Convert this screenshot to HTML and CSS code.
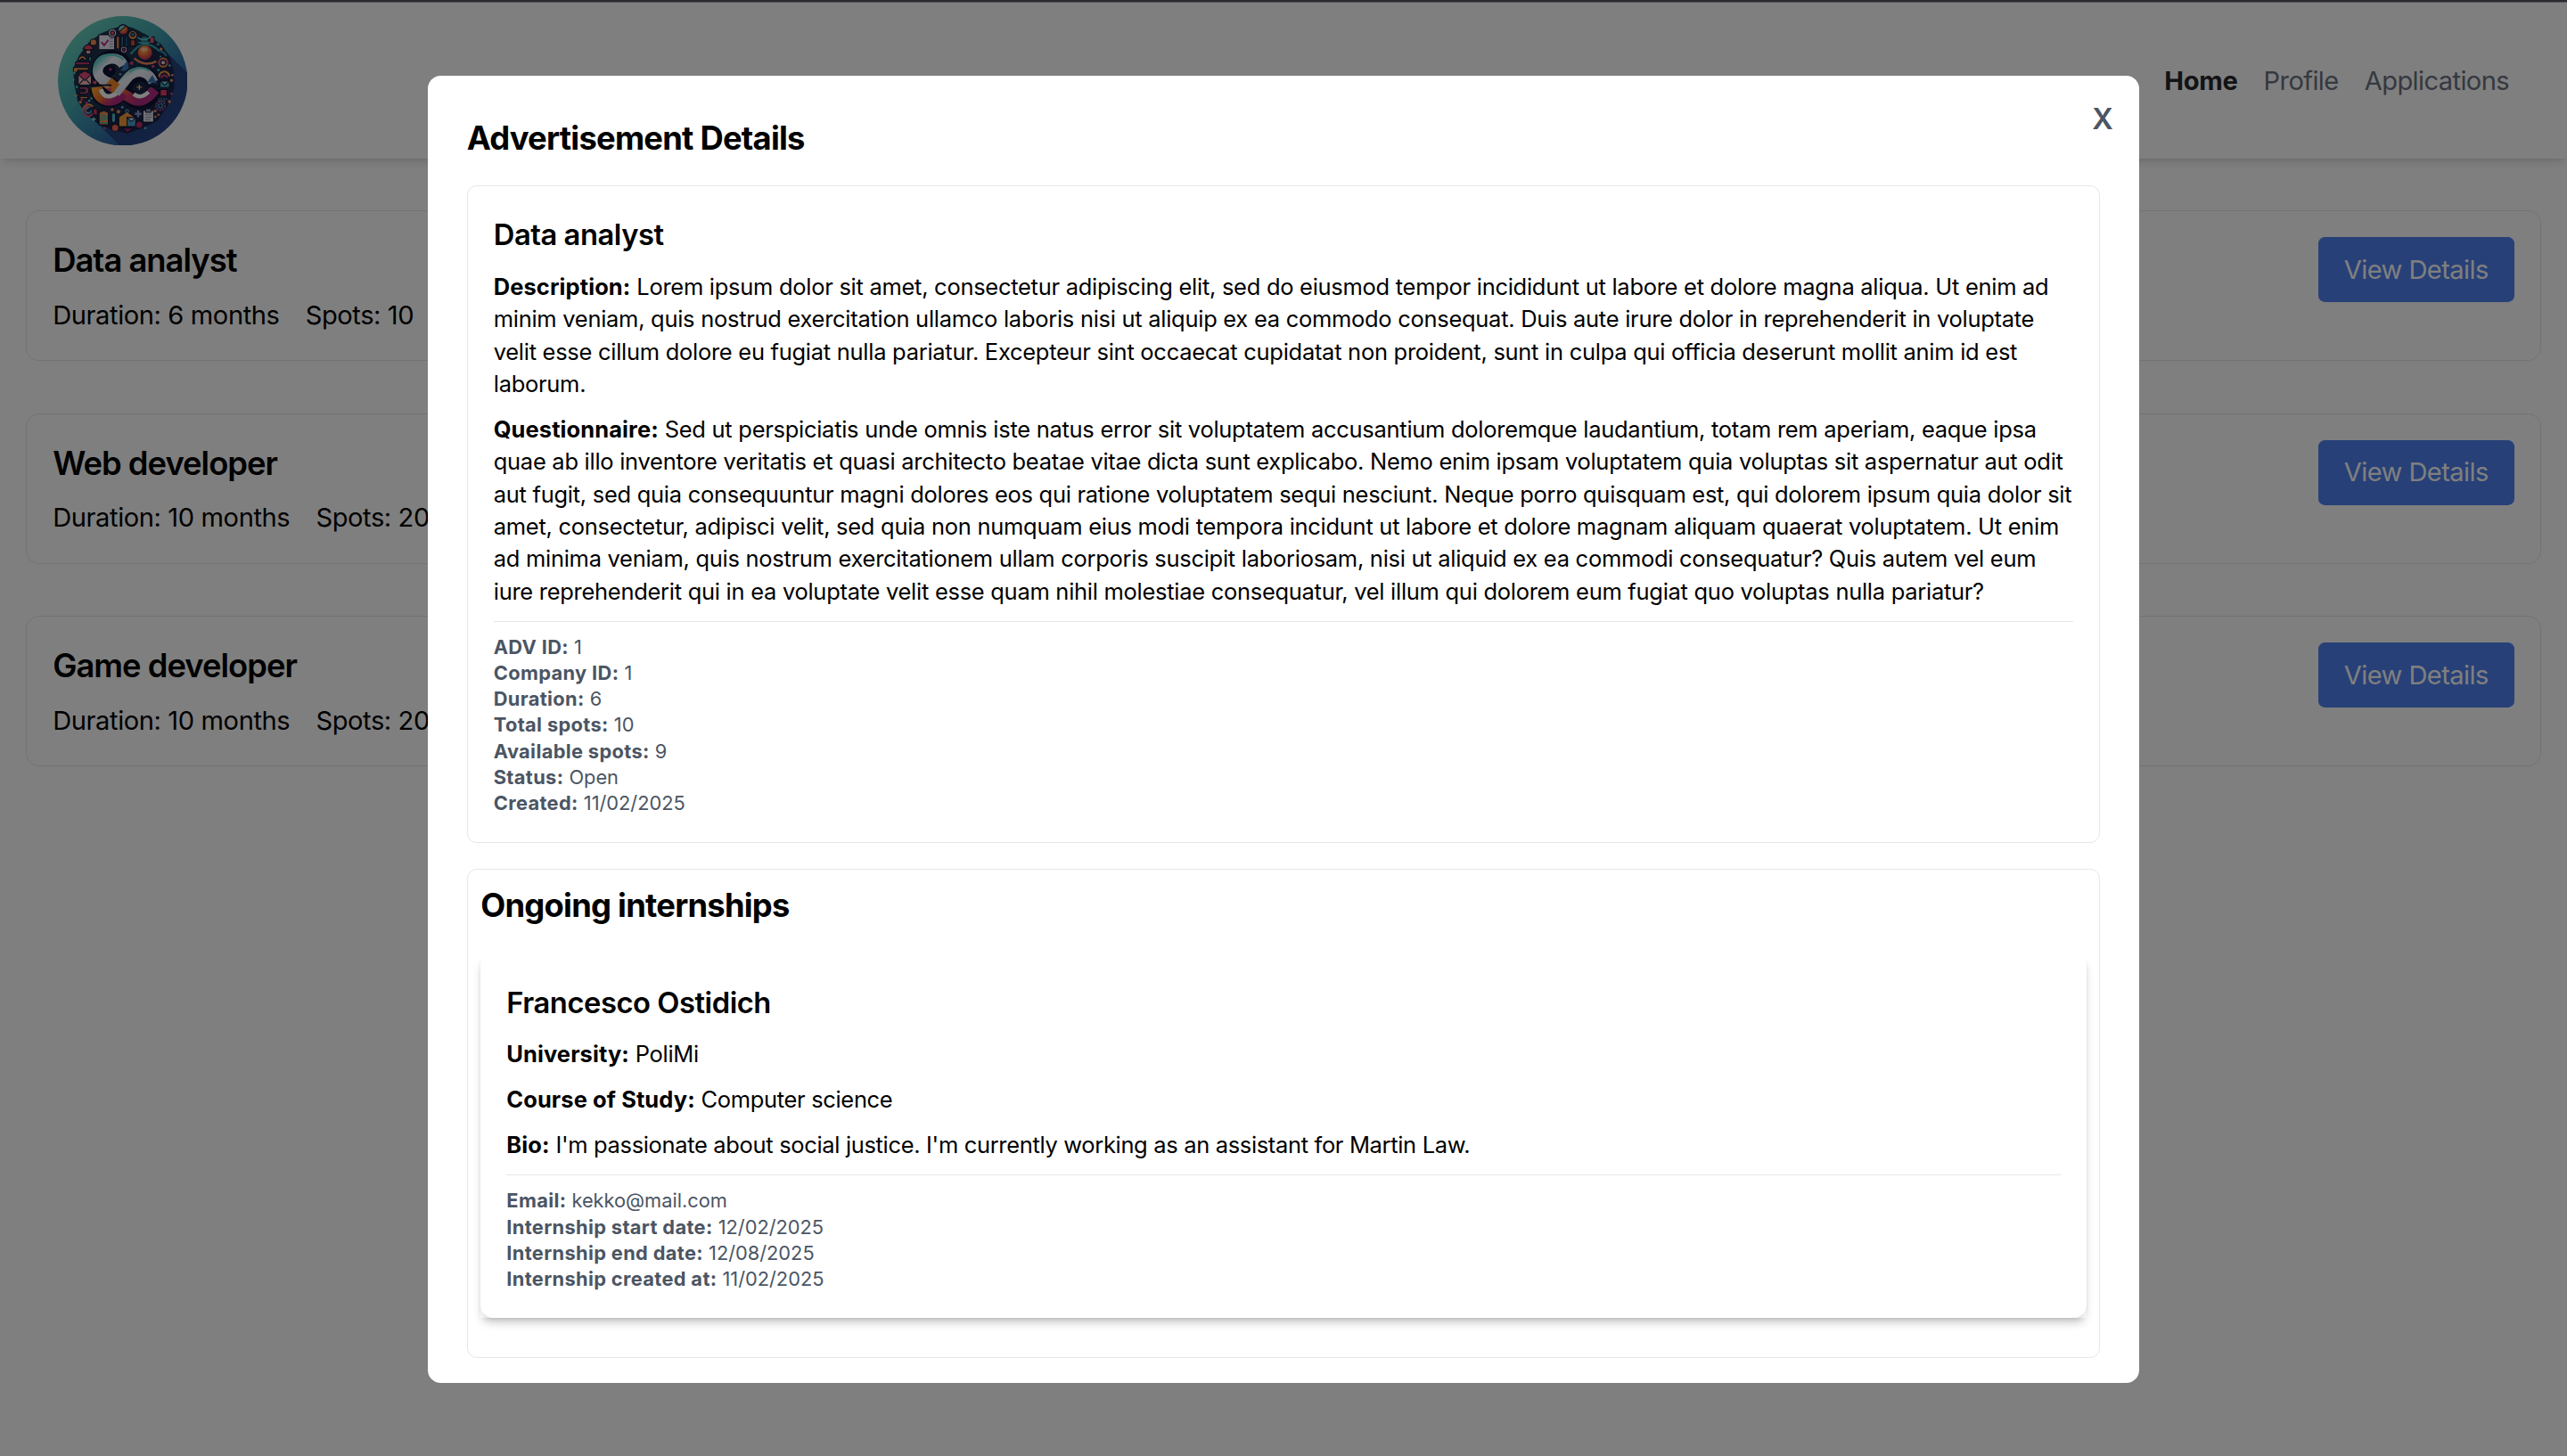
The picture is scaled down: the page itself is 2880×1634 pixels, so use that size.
FILE: index.html
```html
<!DOCTYPE html>
<html lang="en">
<head>
<meta charset="utf-8">
<title>Advertisements</title>
<link rel="stylesheet" href="styles.css">
</head>
<body>
<div class="window-edge"></div>
<div class="page">
  <header class="topbar">
    <svg class="logo" viewBox="46 24 435 435" aria-label="SC logo">
      <defs>
        <linearGradient id="bg" x1="0.1" y1="0.1" x2="0.85" y2="0.9">
          <stop offset="0" stop-color="#68d0b8"/><stop offset="0.4" stop-color="#44a8b0"/><stop offset="0.75" stop-color="#2f69a4"/><stop offset="1" stop-color="#284690"/>
        </linearGradient>
        <linearGradient id="cast" x1="0.2" y1="0.2" x2="0.9" y2="0.9">
          <stop offset="0" stop-color="#1b2250"/><stop offset="1" stop-color="#2b4c94"/>
        </linearGradient>
        <linearGradient id="warm" x1="0" y1="0" x2="1" y2="0.5">
          <stop offset="0" stop-color="#ffa030"/><stop offset="0.5" stop-color="#e86a28"/><stop offset="0.75" stop-color="#c83a68"/><stop offset="1" stop-color="#b02a80"/>
        </linearGradient>
        <linearGradient id="cool" x1="0" y1="0" x2="1" y2="1">
          <stop offset="0" stop-color="#58c8c8"/><stop offset="0.3" stop-color="#eef2fa"/><stop offset="0.75" stop-color="#d8dcea"/><stop offset="1" stop-color="#fff"/>
        </linearGradient>
        <radialGradient id="ball" cx="0.4" cy="0.3" r="0.8">
          <stop offset="0" stop-color="#ffc078"/><stop offset="0.45" stop-color="#f07030"/><stop offset="1" stop-color="#a02070"/>
        </radialGradient>
        <clipPath id="round"><circle cx="263.500" cy="241.500" r="217.500"/></clipPath>
      </defs>
      <g clip-path="url(#round)">
        <rect x="46" y="24" width="435" height="435" fill="url(#bg)"/>
        <path d="M385 120L520 255V480H275L160 365Z" fill="url(#cast)" opacity="0.75"/>
        <path d="M265 55L300 64L345 88L392 118L420 160L434 205L436 265L415 325L380 375L330 400L280 417L235 408L185 390L140 352L112 310L100 250L97 200L118 155L150 112L190 82L225 68Z" fill="#17203f" opacity="0.88"/>

        <g stroke="#10152f" stroke-width="3">
          <path d="M183 87H236V137H183Z" fill="#e9e6f2"/>
          <circle cx="265" cy="70" r="17" fill="url(#ball)"/>
          <path d="M265 53A17 17 0 0 0 250 78L275 57Z" fill="#7cc8c8"/>
          <circle cx="229" cy="81" r="14" fill="#e8d8ea"/>
          <circle cx="229" cy="81" r="7" fill="#e05070"/>
          <path d="M242 92H252V130L247 138L242 130Z" fill="#f08838"/>
          <path d="M258 92H266V128H258ZM272 92H279V128H272Z" fill="#2e6e98"/>
          <circle cx="267" cy="137" r="11" fill="#e8c0d0"/>
          <circle cx="267" cy="137" r="5" fill="#b03070"/>
          <circle cx="297" cy="88" r="15" fill="#f09858"/>
          <circle cx="297" cy="86" r="7" fill="#2e8098"/>
          <path d="M289 104H305V124H289Z" fill="#c05038"/>
          <circle cx="336" cy="105" r="15" fill="#2c8098"/>
          <path d="M354 94H369V116H354Z" fill="#e05868"/>
          <circle cx="392" cy="135" r="7" fill="#f09060"/>
          <circle cx="165" cy="112" r="11" fill="#f08850"/>
          <path d="M130 134Q148 106 166 134Q148 142 130 134Z" fill="#d84068"/>
          <path d="M138 138H158L154 152H142Z" fill="#f0a8a0"/>
          <path d="M114 172A14 14 0 0 1 142 172H134A6 6 0 0 0 122 172Z" fill="#f09850"/>
          <path d="M150 160H158V176H150Z" fill="#3eaab8"/>
          <path d="M105 179H153V188H105Z" fill="#c83a70"/>
          <path d="M98 197H148V206H112V212H98Z" fill="#e8904a"/>
          <path d="M114 220H158V256H114Z" fill="#f0b8b8"/>
          <path d="M114 220L136 240L158 220L136 208Z" fill="#e04878"/>
          <path d="M114 256L131 238M158 256L141 238" fill="none"/>
          <path d="M118 262H138A12 12 0 0 1 138 286H118V278H136A5 5 0 0 0 136 270H118Z" fill="#a84868"/>
          <path d="M120 294H146V301H120Z" fill="#f09848"/>
        </g>

        <path d="M192 111L201 122L215 104" fill="none" stroke="#b82c80" stroke-width="6"/>
        <path d="M219 100H231M219 109H231M219 118H231M219 127H231" stroke="#9a98b8" stroke-width="3"/>
        <path d="M313 96Q336 112 359 92M316 112Q338 120 354 112" fill="none" stroke="#58c8c8" stroke-width="4"/>

        <g fill="none" stroke-width="7">
          <path d="M290 152Q336 92 387 142" stroke="#38a0a8"/>
          <path d="M302 166Q336 196 376 176" stroke="#f08858"/>
          <path d="M384 140Q402 142 410 158" stroke="#2c86a8"/>
        </g>
        <circle cx="338" cy="148" r="27" fill="#17203f"/>
        <circle cx="338" cy="147" r="24" fill="url(#ball)"/>
        <ellipse cx="336" cy="136" rx="11" ry="6" fill="#ffd0b0" opacity="0.7"/>

        <g fill="none" stroke-width="6">
          <circle cx="399" cy="180" r="14" stroke="#f08848"/>
          <path d="M391 169A14 14 0 0 0 388 188M410 171A14 14 0 0 1 412 187" stroke="#c83878"/>
          <path d="M385 230A17 17 0 0 1 420 226" stroke="#f09848"/>
          <path d="M394 233A9 9 0 0 1 412 231" stroke="#c83878"/>
          <circle cx="390" cy="325" r="15" stroke="#8c4690" stroke-dasharray="7 3"/>
          <circle cx="390" cy="325" r="7" stroke="#3494a8" stroke-width="4"/>
          <path d="M131 340A18 18 0 0 1 163 328" stroke="#f09848"/>
          <path d="M163 349A16 16 0 1 1 155 330" stroke="#d84878"/>
          <path d="M157 341A9 9 0 1 1 149 332" stroke="#70c0c8" stroke-width="4"/>
        </g>
        <circle cx="399" cy="180" r="6" fill="#e8d0d0"/>

        <g stroke="#10152f" stroke-width="3">
          <path d="M388 242H420V264H388Z" fill="#3aa0b0"/>
          <path d="M388 242L404 256L420 242Z" fill="#78d0d0"/>
          <path d="M389 271H412V292H389Z" fill="#e03c68"/>
          <path d="M165 332L178 338V358L165 354Z" fill="#c83860"/>
          <path d="M184 348L200 341L215 348V389H184Z" fill="#f0884a"/>
          <path d="M226 350H239V376L232 384L226 376Z" fill="#50b8c8"/>
          <path d="M262 400H298L279 417Z" fill="#8c2070"/>
          <path d="M250 363L277 345L304 363V395H250Z" fill="#f09a3c"/>
          <path d="M278 365H307V395H278Z" fill="#4a9cc8"/>
          <path d="M278 365H307L292 378Z" fill="#c8dcec"/>
          <circle cx="319" cy="389" r="12" fill="#b02c68"/>
          <circle cx="238" cy="399" r="12" fill="#f06050"/>
          <path d="M331 341H367V380H331Z" fill="#e0e2ec"/>
          <path d="M341 335H358V347H341Z" fill="#8e98ae"/>
        </g>
        <path d="M187 354L212 360M187 364H212M187 373L212 369M187 382H212" stroke="#42b0a0" stroke-width="4"/>
        <path d="M338 355H361M338 363H361M338 371H355" stroke="#9098b0" stroke-width="3"/>
        <path d="M315 341V363M304 352H326" stroke="#8090c8" stroke-width="7"/>
        <path d="M166 363V377M159 370H173" stroke="#98d0e0" stroke-width="4"/>
        <circle cx="278" cy="343" r="5" fill="none" stroke="#58b0b8" stroke-width="3"/>
        <path d="M381 302H412M383 309H408" stroke="#78b8d0" stroke-width="3" stroke-dasharray="5 4"/>

        <g fill="#f0885a">
          <circle cx="372" cy="343" r="5"/><circle cx="383" cy="355" r="4"/><circle cx="373" cy="362" r="4"/><circle cx="121" cy="313" r="5"/><circle cx="107" cy="291" r="4"/><circle cx="249" cy="345" r="6"/><circle cx="228" cy="338" r="5"/><circle cx="427" cy="240" r="5"/><circle cx="430" cy="222" r="4"/><circle cx="420" cy="311" r="5"/>
        </g>
        <g fill="#d04080">
          <circle cx="293" cy="182" r="6"/><circle cx="365" cy="193" r="5"/><circle cx="126" cy="304" r="4"/><circle cx="143" cy="316" r="5"/><circle cx="203" cy="400" r="4"/><circle cx="427" cy="285" r="4"/>
        </g>
        <g fill="#58c0cc">
          <circle cx="101" cy="215" r="4"/><circle cx="98" cy="238" r="4"/><circle cx="109" cy="262" r="4"/><circle cx="151" cy="308" r="4"/><circle cx="159" cy="300" r="4"/><circle cx="383" cy="205" r="4"/><circle cx="421" cy="190" r="4"/><circle cx="262" cy="330" r="4"/><circle cx="339" cy="400" r="4"/><circle cx="382" cy="119" r="4"/><circle cx="390" cy="160" r="3"/>
        </g>

        <!-- interlaced monogram: dark backing, warm lower loops, light upper loops -->
        <g fill="none" stroke="#0e1230" stroke-width="50">
          <path d="M270 188A45 45 0 1 0 188 232L288 296A44 44 0 0 0 366 270"/>
          <path d="M177 268A40 40 0 0 0 246 293L284 236A48 48 0 0 1 364 244"/>
        </g>
        <g fill="none">
          <path d="M192 236L262 284L288 298Q330 326 371 271" stroke="url(#warm)" stroke-width="35"/>
          <path d="M300 286Q325 304 350 279" stroke="#fff" stroke-width="13"/>
          <path d="M176 262Q180 306 218 307Q246 306 262 282" stroke="url(#warm)" stroke-width="36"/>
          <path d="M190 270Q198 296 220 293Q238 290 248 276" stroke="#fff" stroke-width="15"/>
          <path d="M239 282L276 236Q297 208 326 212Q352 214 366 246" stroke="url(#cool)" stroke-width="33"/>
          <path d="M286 212Q318 186 354 208" stroke="#60d0c8" stroke-width="7"/>
          <path d="M266 190Q252 162 217 168Q179 178 179 209Q181 236 224 250" stroke="url(#cool)" stroke-width="34"/>
          <path d="M168 190Q180 154 220 154Q250 154 266 170" stroke="#60d0c8" stroke-width="7"/>
        </g>
        <path d="M226 231L253 253L232 281L208 252Z" fill="#f08828"/>
        <path d="M256 207L278 173L284 198L272 208Z" fill="#3678b8"/>
        <path d="M346 246L363 222L378 250Z" fill="#3678b8"/>
        <path d="M160 256H226M340 261H388" stroke="#0e1230" stroke-width="5"/>
        <circle cx="222" cy="206" r="18" fill="#0e1230"/>
        <circle cx="222" cy="203" r="5" fill="#b83878"/>
        <circle cx="219" cy="270" r="6" fill="#d84c78"/>
        <path d="M319 254V272M310 263H328" stroke="#ffb878" stroke-width="4"/>
        <circle cx="255" cy="219" r="4" fill="#70a0b8"/>
        <circle cx="170" cy="247" r="6" fill="#d05078"/>
      </g>
    </svg>
    <nav class="nav">
      <a class="nav-link nav-link-active">Home</a>
      <a class="nav-link">Profile</a>
      <a class="nav-link">Applications</a>
    </nav>
  </header>

  <main class="ads">
    <article class="ad">
      <div>
        <h2 class="ad-title">Data analyst</h2>
        <div class="ad-facts"><span>Duration: 6 months</span><span>Spots: 10</span></div>
      </div>
      <button class="button">View Details</button>
    </article>
    <article class="ad">
      <div>
        <h2 class="ad-title">Web developer</h2>
        <div class="ad-facts"><span>Duration: 10 months</span><span>Spots: 20</span></div>
      </div>
      <button class="button">View Details</button>
    </article>
    <article class="ad">
      <div>
        <h2 class="ad-title">Game developer</h2>
        <div class="ad-facts"><span>Duration: 10 months</span><span>Spots: 20</span></div>
      </div>
      <button class="button">View Details</button>
    </article>
  </main>
</div>

<div class="overlay">
  <div class="modal">
    <button class="close">X</button>
    <h2 class="heading modal-heading">Advertisement Details</h2>
    <section class="panel details">
      <h3 class="subheading">Data analyst</h3>
      <p class="text"><b>Description:</b> Lorem ipsum dolor sit amet, consectetur adipiscing elit, sed do eiusmod tempor incididunt ut labore et dolore magna aliqua. Ut enim ad minim veniam, quis nostrud exercitation ullamco laboris nisi ut aliquip ex ea commodo consequat. Duis aute irure dolor in reprehenderit in voluptate velit esse cillum dolore eu fugiat nulla pariatur. Excepteur sint occaecat cupidatat non proident, sunt in culpa qui officia deserunt mollit anim id est laborum.</p>
      <p class="text"><b>Questionnaire:</b> Sed ut perspiciatis unde omnis iste natus error sit voluptatem accusantium doloremque laudantium, totam rem aperiam, eaque ipsa quae ab illo inventore veritatis et quasi architecto beatae vitae dicta sunt explicabo. Nemo enim ipsam voluptatem quia voluptas sit aspernatur aut odit aut fugit, sed quia consequuntur magni dolores eos qui ratione voluptatem sequi nesciunt. Neque porro quisquam est, qui dolorem ipsum quia dolor sit amet, consectetur, adipisci velit, sed quia non numquam eius modi tempora incidunt ut labore et dolore magnam aliquam quaerat voluptatem. Ut enim ad minima veniam, quis nostrum exercitationem ullam corporis suscipit laboriosam, nisi ut aliquid ex ea commodi consequatur? Quis autem vel eum iure reprehenderit qui in ea voluptate velit esse quam nihil molestiae consequatur, vel illum qui dolorem eum fugiat quo voluptas nulla pariatur?</p>
      <div class="meta">
        <p><b>ADV ID:</b> 1</p>
        <p><b>Company ID:</b> 1</p>
        <p><b>Duration:</b> 6</p>
        <p><b>Total spots:</b> 10</p>
        <p><b>Available spots:</b> 9</p>
        <p><b>Status:</b> Open</p>
        <p><b>Created:</b> 11/02/2025</p>
      </div>
    </section>
    <section class="panel internships">
      <h2 class="heading">Ongoing internships</h2>
      <div class="intern-wrap">
        <article class="intern">
          <h3 class="subheading">Francesco Ostidich</h3>
          <p class="text"><b>University:</b> PoliMi</p>
          <p class="text"><b>Course of Study:</b> Computer science</p>
          <p class="text"><b>Bio:</b> I'm passionate about social justice. I'm currently working as an assistant for Martin Law.</p>
          <div class="meta">
            <p><b>Email:</b> kekko@mail.com</p>
            <p><b>Internship start date:</b> 12/02/2025</p>
            <p><b>Internship end date:</b> 12/08/2025</p>
            <p><b>Internship created at:</b> 11/02/2025</p>
          </div>
        </article>
      </div>
    </section>
  </div>
</div>
</body>
</html>
```
FILE: styles.css
```css
:root {
  --shadow: 0 .25rem .375rem -.0625rem rgba(0, 0, 0, .1), 0 .125rem .25rem -.125rem rgba(0, 0, 0, .1);
  --line: #e5e7eb;
}

* { box-sizing: border-box; margin: 0; padding: 0; }

html { font-size: 29.1px; }

body {
  height: 1634px;
  overflow: hidden;
  background: #fff;
  color: #000;
  font-family: "Inter", "Liberation Sans", sans-serif;
  font-size: 1rem;
  line-height: 1.5;
}

b { font-weight: 700; }
button { border: 0; font: inherit; }

.window-edge {
  height: 3px;
  background: #2b2a30;
  border-bottom: 1px solid #55555f;
}

.topbar {
  display: flex;
  align-items: center;
  justify-content: space-between;
  height: 175px;
  padding: 0 65px 0 64.500px;
  background: #fff;
  box-shadow: var(--shadow);
}

.logo { width: 5rem; height: 5rem; display: block; }

.nav { display: flex; gap: 1rem; }
.nav-link { color: #6b7280; letter-spacing: -.021em; }
.nav-link-active { color: #27272a; font-weight: 700; letter-spacing: -.01em; }

.ads {
  display: flex;
  flex-direction: column;
  gap: 2rem;
  padding: 2rem 1rem;
}

.ad {
  display: flex;
  justify-content: space-between;
  align-items: flex-start;
  padding: 1rem;
  border: 1px solid var(--line);
  border-radius: .5rem;
}

.ad-title {
  font-size: 1.25rem;
  font-weight: 600;
  line-height: 1.75rem;
  letter-spacing: -.027em;
  padding-top: 1px;
  margin-bottom: calc(.5rem - 1px);
}

.ad-facts { display: flex; gap: 1rem; letter-spacing: -.014em; }

.button {
  padding: .5rem 1rem;
  border-radius: .25rem;
  background: #4e80f0;
  color: #fff;
  letter-spacing: -.02em;
}

.overlay {
  position: fixed;
  inset: 3px 0 0;
  display: flex;
  align-items: center;
  justify-content: center;
  background: rgba(0, 0, 0, .5);
}

.modal {
  position: relative;
  width: 66.6667%;
  height: 90%;
  padding: 1.5rem;
  border-radius: .5rem;
  background: #fff;
}

.close {
  position: absolute;
  top: .8rem;
  right: 1rem;
  background: none;
  color: #4b5563;
  font-size: 1.125rem;
  font-weight: 600;
  line-height: 1.75rem;
}

.heading {
  font-size: 1.25rem;
  font-weight: 700;
  line-height: 1.75rem;
  letter-spacing: -.021em;
  margin-bottom: 1rem;
}

.modal-heading { padding-top: 2px; margin-bottom: calc(1rem - 2px); }

.subheading {
  font-size: 1.125rem;
  font-weight: 600;
  line-height: 1.75rem;
  letter-spacing: -.014em;
  margin-bottom: .5rem;
}

.panel {
  border: 1px solid var(--line);
  border-radius: .375rem;
}

.details { padding: 1rem; margin-bottom: 1rem; }
.internships { padding: .5rem; }

.text {
  font-size: .875rem;
  line-height: 1.25rem;
  letter-spacing: -.0103em;
  margin-bottom: .5rem;
}
.text b { letter-spacing: .004em; }
.intern .text { letter-spacing: -.0125em; }

.meta {
  border-top: 1px solid var(--line);
  padding-top: .5rem;
  color: #4b5563;
  font-size: .75rem;
  line-height: 1rem;
  letter-spacing: -.001em;
}
.meta b { letter-spacing: .016em; }

.intern-wrap { margin-bottom: 1rem; box-shadow: var(--shadow); }
.intern { padding: 1rem; border-radius: .5rem; box-shadow: var(--shadow); }
```
